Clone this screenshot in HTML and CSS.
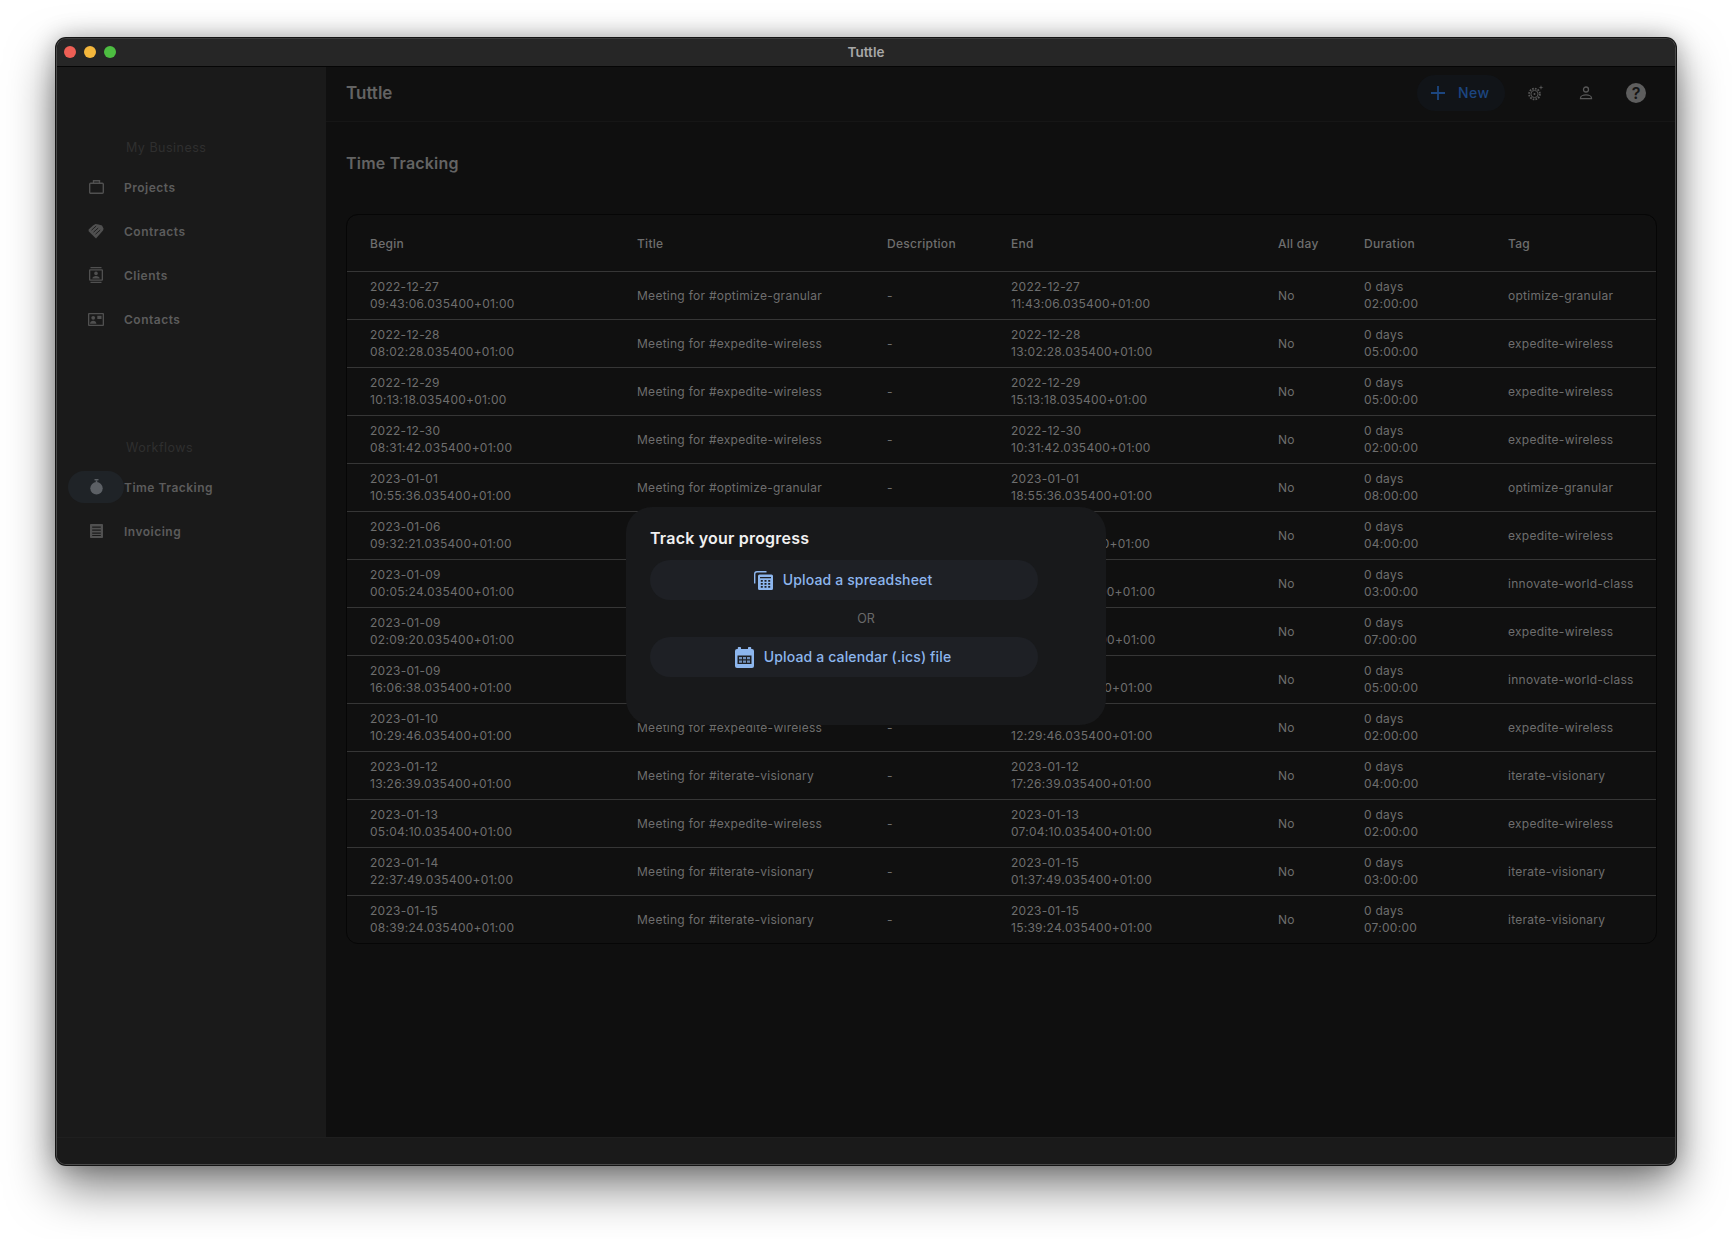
FILE: index.html
```html
<!DOCTYPE html>
<html>
<head>
  <title>Tuttle</title>
  <meta name="viewport" content="width=device-width, initial-scale=1.0">
  <link rel="stylesheet" href="styles.css">
</head>
<body>

<div class="window">
  <div class="titlebar">
    <div class="lights">
      <span class="light red"></span>
      <span class="light yellow"></span>
      <span class="light green"></span>
    </div>
    <span class="window-title">Tuttle</span>
  </div>

  <div class="app">
    <nav class="sidebar">
      <div class="nav-heading">My Business</div>
      <a class="nav-item">
        <span class="nav-icon"><svg width="15" height="14" viewBox="0 0 15 14" fill="none" stroke="currentColor" stroke-width="1.4"><rect x="0.7" y="3.2" width="13.6" height="10" rx="1"/><path d="M4.500 3.200V0.800h6v2.400"/></svg></span>
        <span>Projects</span>
      </a>
      <a class="nav-item">
        <span class="nav-icon"><svg width="16" height="15" viewBox="0 0 16 15" fill="currentColor"><path d="M5 1.500 7.500 0l3 .6L14 1.500l1.600 3.300L15 6.500 8 14.600 .6 7.200V5.600z"/><path d="M3.500 6.200 8.200 2M5.500 8.200l4.700-4.200M7.500 10.200l4.700-4.200" stroke="#1a1a1a" stroke-width="0.9"/></svg></span>
        <span>Contracts</span>
      </a>
      <a class="nav-item">
        <span class="nav-icon"><svg width="14" height="16" viewBox="0 0 14 16" fill="currentColor"><path d="M1.500 0h11v1.300h-11zM1.500 14.700h11V16h-11z"/><path fill-rule="evenodd" d="M1 2.300h12a1 1 0 0 1 1 1v9.400a1 1 0 0 1-1 1H1a1 1 0 0 1-1-1V3.300a1 1 0 0 1 1-1zm.3 1.300v8.800h11.400V3.600z"/><circle cx="7" cy="6.400" r="1.800"/><path d="M3.300 11.500c0-1.700 1.900-2.600 3.700-2.600s3.700.9 3.700 2.600z"/></svg></span>
        <span>Clients</span>
      </a>
      <a class="nav-item">
        <span class="nav-icon"><svg width="16" height="13" viewBox="0 0 16 13" fill="currentColor"><path fill-rule="evenodd" d="M1 0h14a1 1 0 0 1 1 1v11a1 1 0 0 1-1 1H1a1 1 0 0 1-1-1V1a1 1 0 0 1 1-1zm.3 1.300v10.400h13.400V1.300z"/><circle cx="5.200" cy="4.800" r="1.900"/><path d="M2 10.700c0-2 1.500-3 3.200-3s3.200 1 3.200 3zM9.300 2.700h4.200v3.200H9.300z"/></svg></span>
        <span>Contacts</span>
      </a>

      <div class="nav-heading workflows">Workflows</div>
      <a class="nav-item active">
        <span class="nav-icon"><svg width="13" height="16" viewBox="0 0 13 16" fill="currentColor"><path d="M4.500 0h4v1.400h-4z"/><circle cx="6.500" cy="9.300" r="6.200"/><path d="M6.500 1.400v3" stroke="currentColor" stroke-width="1.600"/></svg></span>
        <span>Time Tracking</span>
      </a>
      <a class="nav-item">
        <span class="nav-icon"><svg width="13" height="14" viewBox="0 0 13 14" fill="currentColor"><path fill-rule="evenodd" d="M.8 0h11.400a.8.8 0 0 1 .8.8v12.400a.8.8 0 0 1-.8.8H.8a.8.8 0 0 1-.8-.8V.8A.8.8 0 0 1 .8 0zM2.200 2.600v1.200h8.600V2.600zm0 3v1.200h8.600V5.600zm0 3v1.200h8.600V8.600zm0 2.400v1h8.600v-1z"/></svg></span>
        <span>Invoicing</span>
      </a>
    </nav>

    <main class="main">
      <header class="topbar">
        <span class="app-name">Tuttle</span>
        <div class="actions">
          <button class="new-btn">
            <svg width="16" height="16" viewBox="0 0 16 16" fill="none" stroke="currentColor" stroke-width="1.8"><path d="M8 1v14M1 8h14"/></svg>
            <span>New</span>
          </button>
          <span class="action gear">
            <svg width="16" height="16" viewBox="0 0 16 16" fill="none" stroke="currentColor"><circle cx="6.500" cy="9" r="5.400" stroke-width="1.800" stroke-dasharray="1.700 1.100"/><circle cx="6.500" cy="9" r="3.600" stroke-width="1"/><circle cx="6.500" cy="9" r="1" fill="currentColor" stroke="none"/><path d="M13 0l.6 1.900 1.900.6-1.900.6-.6 1.900-.6-1.900-1.900-.6 1.900-.6z" fill="currentColor" stroke="none"/></svg>
          </span>
          <span class="action person">
            <svg width="14" height="14" viewBox="0 0 14 14" fill="none" stroke="currentColor" stroke-width="1.300"><circle cx="7" cy="3.500" r="2.500"/><path d="M1.500 12.700v-.8c0-1.800 2.800-3 5.500-3s5.500 1.200 5.500 3v.8z"/></svg>
          </span>
          <span class="help">?</span>
        </div>
      </header>

      <div class="content">
        <h2 class="page-title">Time Tracking</h2>

        <div class="table-card">
          <table class="entries">
            <colgroup>
              <col class="c-begin"><col class="c-title"><col class="c-desc"><col class="c-end"><col class="c-allday"><col class="c-dur"><col class="c-tag">
            </colgroup>
            <thead>
              <tr><th>Begin</th><th>Title</th><th>Description</th><th>End</th><th>All day</th><th>Duration</th><th>Tag</th></tr>
            </thead>
            <tbody>
              <tr><td>2022-12-27<br>09:43:06.035400+01:00</td><td>Meeting for #optimize-granular</td><td>-</td><td>2022-12-27<br>11:43:06.035400+01:00</td><td>No</td><td>0 days<br>02:00:00</td><td>optimize-granular</td></tr>
              <tr><td>2022-12-28<br>08:02:28.035400+01:00</td><td>Meeting for #expedite-wireless</td><td>-</td><td>2022-12-28<br>13:02:28.035400+01:00</td><td>No</td><td>0 days<br>05:00:00</td><td>expedite-wireless</td></tr>
              <tr><td>2022-12-29<br>10:13:18.035400+01:00</td><td>Meeting for #expedite-wireless</td><td>-</td><td>2022-12-29<br>15:13:18.035400+01:00</td><td>No</td><td>0 days<br>05:00:00</td><td>expedite-wireless</td></tr>
              <tr><td>2022-12-30<br>08:31:42.035400+01:00</td><td>Meeting for #expedite-wireless</td><td>-</td><td>2022-12-30<br>10:31:42.035400+01:00</td><td>No</td><td>0 days<br>02:00:00</td><td>expedite-wireless</td></tr>
              <tr><td>2023-01-01<br>10:55:36.035400+01:00</td><td>Meeting for #optimize-granular</td><td>-</td><td>2023-01-01<br>18:55:36.035400+01:00</td><td>No</td><td>0 days<br>08:00:00</td><td>optimize-granular</td></tr>
              <tr><td>2023-01-06<br>09:32:21.035400+01:00</td><td>Meeting for #expedite-wireless</td><td>-</td><td>2023-01-06<br>13:32:21.035400+01:00</td><td>No</td><td>0 days<br>04:00:00</td><td>expedite-wireless</td></tr>
              <tr><td>2023-01-09<br>00:05:24.035400+01:00</td><td>Meeting for #innovate-world-class</td><td>-</td><td>2023-01-09<br>03:05:24.035400+01:00</td><td>No</td><td>0 days<br>03:00:00</td><td>innovate-world-class</td></tr>
              <tr><td>2023-01-09<br>02:09:20.035400+01:00</td><td>Meeting for #expedite-wireless</td><td>-</td><td>2023-01-09<br>09:09:20.035400+01:00</td><td>No</td><td>0 days<br>07:00:00</td><td>expedite-wireless</td></tr>
              <tr><td>2023-01-09<br>16:06:38.035400+01:00</td><td>Meeting for #innovate-world-class</td><td>-</td><td>2023-01-09<br>21:06:38.035400+01:00</td><td>No</td><td>0 days<br>05:00:00</td><td>innovate-world-class</td></tr>
              <tr><td>2023-01-10<br>10:29:46.035400+01:00</td><td>Meeting for #expedite-wireless</td><td>-</td><td>2023-01-10<br>12:29:46.035400+01:00</td><td>No</td><td>0 days<br>02:00:00</td><td>expedite-wireless</td></tr>
              <tr><td>2023-01-12<br>13:26:39.035400+01:00</td><td>Meeting for #iterate-visionary</td><td>-</td><td>2023-01-12<br>17:26:39.035400+01:00</td><td>No</td><td>0 days<br>04:00:00</td><td>iterate-visionary</td></tr>
              <tr><td>2023-01-13<br>05:04:10.035400+01:00</td><td>Meeting for #expedite-wireless</td><td>-</td><td>2023-01-13<br>07:04:10.035400+01:00</td><td>No</td><td>0 days<br>02:00:00</td><td>expedite-wireless</td></tr>
              <tr><td>2023-01-14<br>22:37:49.035400+01:00</td><td>Meeting for #iterate-visionary</td><td>-</td><td>2023-01-15<br>01:37:49.035400+01:00</td><td>No</td><td>0 days<br>03:00:00</td><td>iterate-visionary</td></tr>
              <tr><td>2023-01-15<br>08:39:24.035400+01:00</td><td>Meeting for #iterate-visionary</td><td>-</td><td>2023-01-15<br>15:39:24.035400+01:00</td><td>No</td><td>0 days<br>07:00:00</td><td>iterate-visionary</td></tr>
            </tbody>
          </table>
        </div>
      </div>
    </main>
  </div>

  <div class="statusbar"></div>

  <div class="dialog">
    <h3 class="dialog-title">Track your progress</h3>
    <button class="upload-btn">
      <svg width="19" height="19" viewBox="0 0 19 19" fill="currentColor"><path d="M3 0h9.500v1.400H3A1.600 1.600 0 0 0 1.400 3v9.500H0V3a3 3 0 0 1 3-3z"/><path fill-rule="evenodd" d="M5.500 3.500h12A1.500 1.500 0 0 1 19 5v12.500a1.500 1.500 0 0 1-1.500 1.500h-12A1.500 1.500 0 0 1 4 17.500V5a1.500 1.500 0 0 1 1.500-1.500zM6 6v1.300h11V6zm.8 3v1.700h2V9zm3.700 0v1.700h2V9zm3.700 0v1.700h2V9zM6.800 12v1.700h2V12zm3.700 0v1.700h2V12zm3.700 0v1.700h2V12zM6.800 15v1.700h2V15zm3.700 0v1.700h2V15zm3.700 0v1.700h2V15z"/></svg>
      <span>Upload a spreadsheet</span>
    </button>
    <div class="or">OR</div>
    <button class="upload-btn">
      <svg width="19" height="21" viewBox="0 0 19 21" fill="currentColor"><path fill-rule="evenodd" d="M3.500 0h1.800a.7.700 0 0 1 .7.700V2h7V.7a.7.700 0 0 1 .7-.7h1.800a.7.700 0 0 1 .7.700V2h.8A2 2 0 0 1 19 4v15a2 2 0 0 1-2 2H2a2 2 0 0 1-2-2V4a2 2 0 0 1 2-2h.8V.7a.7.700 0 0 1 .7-.7zM2.500 8.500v8.500h14V8.500z"/><path d="M4 10h3v2.300H4zM8 10h3v2.300H8zM12 10h3v2.300h-3zM4 13.500h3v2.300H4zM8 13.500h3v2.300H8zM12 13.500h3v2.300h-3z" opacity="0.75"/></svg>
      <span>Upload a calendar (.ics) file</span>
    </button>
  </div>
</div>

</body>
</html>
```

FILE: styles.css
```css
* {
  box-sizing: border-box;
}
body {
  margin: 0;
  background-color: #fff;
  font-family: Inter, "Liberation Sans", sans-serif;
  height: 1239px;
  overflow: hidden;
}

.window {
  position: relative;
  display: flex;
  flex-direction: column;
  margin: 38px 56px 0 56px;
  height: 1127px;
  border-radius: 10px;
  overflow: hidden;
  background-color: #1a1a1a;
  box-shadow: 0 0 0 1px #141414, 0 22px 48px rgba(0, 0, 0, 0.5), 0 0 24px rgba(0, 0, 0, 0.28);
  border: 1px solid #4a4a4a;
  border-top-color: #3c3c3c;
}

.titlebar {
  position: relative;
  flex: none;
  height: 28px;
  padding-bottom: 2px;
  display: flex;
  align-items: center;
  justify-content: center;
  background-color: #262626;
  border-bottom: 1px solid #050505;
}
.lights {
  position: absolute;
  left: 7px;
  top: 7px;
  display: flex;
  gap: 8px;
}
.light {
  width: 12px;
  height: 12px;
  border-radius: 50%;
}
.red { background-color: #ee5f55; }
.yellow { background-color: #f4b73c; }
.green { background-color: #4dbd41; }
.window-title {
  font-size: 13.5px;
  font-weight: 600;
  color: #a8a8a8;
}

.app {
  flex: 1;
  display: flex;
  min-height: 0;
}

.sidebar {
  flex: none;
  width: 269px;
  padding-top: 71px;
  background-color: #1a1a1a;
}
.nav-heading {
  height: 20px;
  margin: 0 0 7px 69px;
  font-size: 12.5px;
  line-height: 20px;
  letter-spacing: 0.5px;
  color: #2f2f2f;
}
.workflows {
  margin-top: 97px;
}
.nav-item {
  display: flex;
  align-items: center;
  height: 44px;
  padding-left: 11px;
  font-size: 12px;
  font-weight: 600;
  letter-spacing: 0.5px;
  color: #5c5c5c;
}
.nav-icon {
  display: flex;
  align-items: center;
  justify-content: center;
  flex: none;
  width: 56px;
  height: 32px;
  border-radius: 16px;
  color: #505050;
}
.active .nav-icon {
  background-color: #1f2327;
  color: #5c6065;
}

.main {
  flex: 1;
  display: flex;
  flex-direction: column;
  min-width: 0;
  background-color: #0f0f0f;
}
.topbar {
  flex: none;
  height: 55px;
  display: flex;
  align-items: center;
  justify-content: space-between;
  padding: 0 29px 3px 20px;
  background-color: #101010;
  border-bottom: 1px solid #161616;
}
.app-name {
  font-size: 17px;
  font-weight: 600;
  color: #636363;
}
.actions {
  display: flex;
  align-items: center;
}
.new-btn {
  display: flex;
  align-items: center;
  gap: 12px;
  height: 36px;
  width: 88px;
  padding: 0 0 0 13px;
  border: none;
  border-radius: 18px;
  background-color: #111418;
  color: #1c4680;
  font-family: inherit;
  font-size: 14px;
  font-weight: 500;
  letter-spacing: 0.4px;
}
.action {
  display: flex;
  align-items: center;
  justify-content: center;
  width: 20px;
  height: 20px;
  color: #575757;
}
.gear {
  margin-left: 21px;
}
.person {
  margin-left: 30px;
}
.help {
  width: 20px;
  height: 20px;
  margin-left: 30px;
  border-radius: 50%;
  background-color: #5e5e5e;
  color: #151515;
  font-size: 16px;
  font-weight: 600;
  line-height: 20px;
  text-align: center;
}

.content {
  flex: 1;
  padding: 0 19px 0 20px;
}
.page-title {
  margin: 29px 0 0 0;
  height: 24px;
  font-size: 16px;
  font-weight: 600;
  line-height: 24px;
  letter-spacing: 0.2px;
  color: #636363;
}
.table-card {
  margin-top: 39px;
  width: 1311px;
  border: 1px solid #060606;
  border-radius: 12px;
  overflow: hidden;
  background-color: #101010;
}
.entries {
  width: 100%;
  border-collapse: collapse;
  table-layout: fixed;
  font-size: 12px;
  letter-spacing: 0.27px;
  color: #6e6e6e;
}
.c-begin { width: 266px; }
.c-title { width: 250px; }
.c-desc { width: 124px; }
.c-end { width: 267px; }
.c-allday { width: 86px; }
.c-dur { width: 144px; }
.c-tag { width: 172px; }
.entries th {
  height: 56px;
  padding: 2px 0 0 24px;
  text-align: left;
  font-weight: 500;
  color: #6e6e6e;
}
.entries td {
  height: 48px;
  padding: 0 0 0 24px;
  line-height: 17px;
  border-top: 1px solid #363636;
  white-space: nowrap;
}
.entries th:first-child,
.entries td:first-child {
  padding-left: 23px;
}

.statusbar {
  flex: none;
  height: 27px;
  background-color: #1a1a1a;
  border-top: 1px solid #1f1f1f;
}

.dialog {
  position: absolute;
  left: 569px;
  top: 468px;
  width: 480px;
  height: 218px;
  padding: 20px 24px;
  border-radius: 26px;
  background-color: #18191b;
}
.dialog-title {
  margin: 0;
  height: 22px;
  font-size: 16px;
  font-weight: 600;
  line-height: 22px;
  letter-spacing: 0.2px;
  color: #f0f0f0;
}
.upload-btn {
  display: flex;
  align-items: center;
  justify-content: center;
  gap: 10px;
  width: 388px;
  height: 40px;
  margin-top: 11px;
  padding: 0 2px 2px 0;
  border: none;
  border-radius: 20px;
  background-color: #1e2025;
  color: #8db6ee;
  font-family: inherit;
  font-size: 14px;
  font-weight: 500;
  letter-spacing: 0.15px;
}
.upload-btn svg {
  margin-top: 2px;
}
.or {
  height: 26px;
  margin-top: 6px;
  margin-bottom: -6px;
  text-align: center;
  font-size: 12.5px;
  line-height: 26px;
  color: #6a6a6a;
}
```
